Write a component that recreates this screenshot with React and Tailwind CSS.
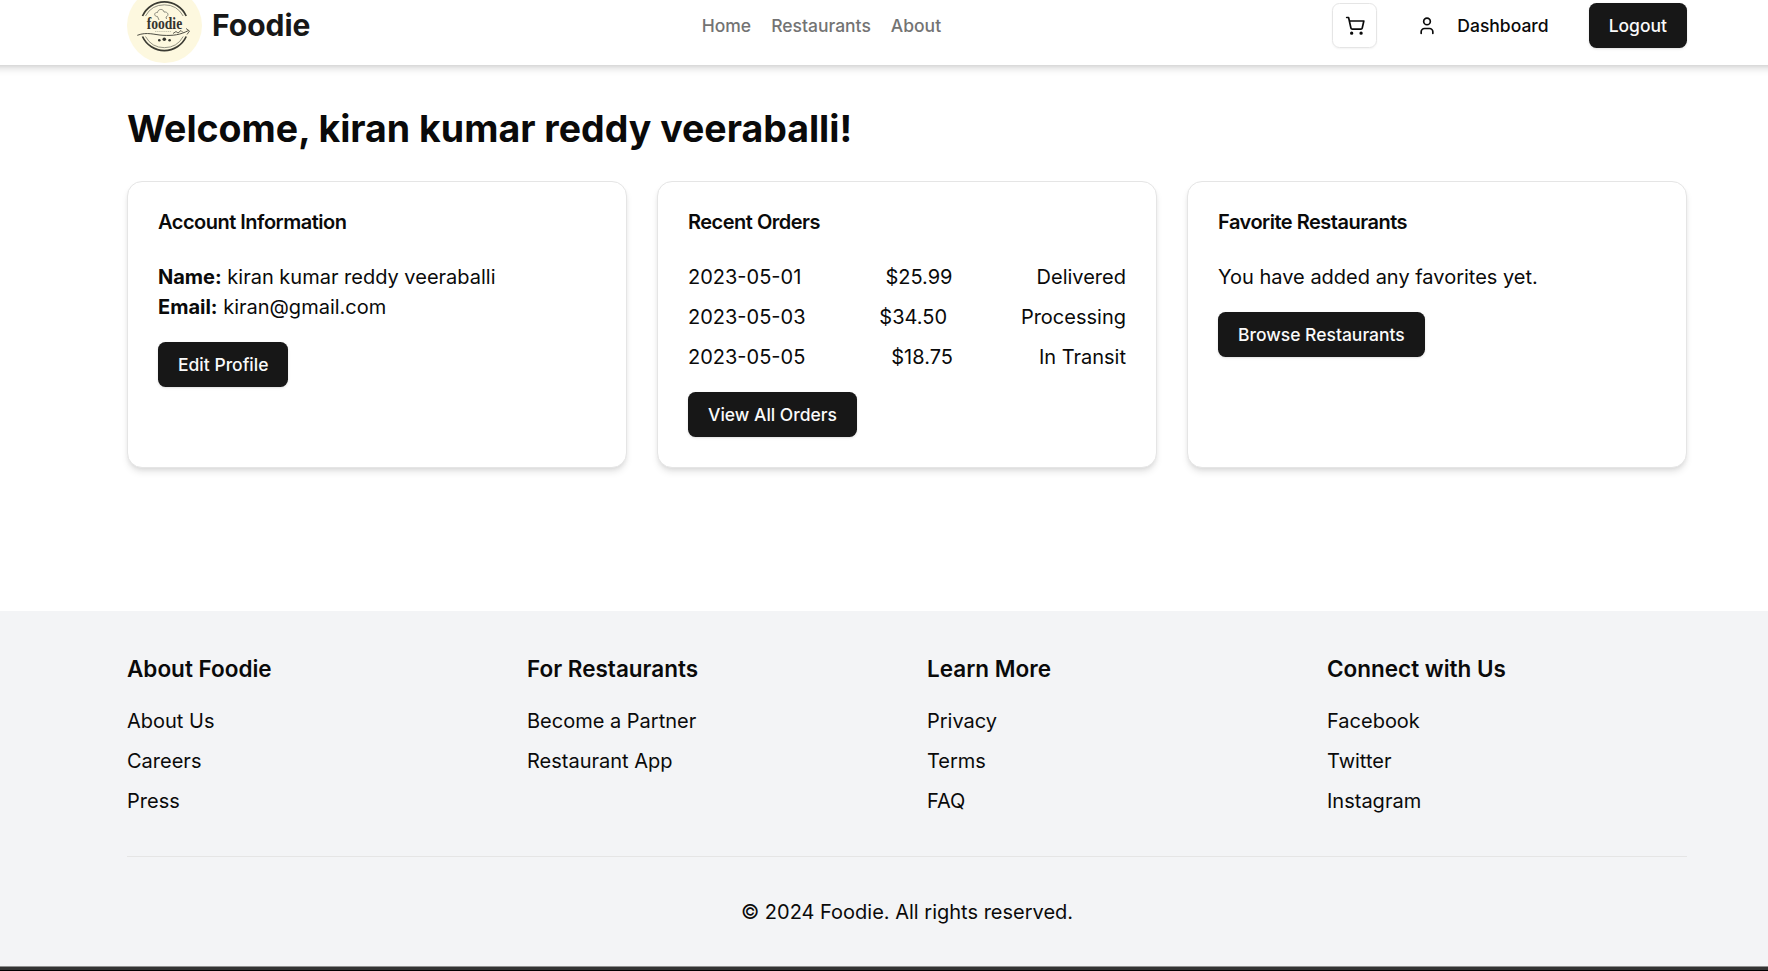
const orders = [
  ["2023-05-01", "$25.99", "Delivered"],
  ["2023-05-03", "$34.50", "Processing"],
  ["2023-05-05", "$18.75", "In Transit"],
];

const footerColumns = [
  { title: "About Foodie", links: ["About Us", "Careers", "Press"] },
  { title: "For Restaurants", links: ["Become a Partner", "Restaurant App"] },
  { title: "Learn More", links: ["Privacy", "Terms", "FAQ"] },
  { title: "Connect with Us", links: ["Facebook", "Twitter", "Instagram"] },
];

function Button({ children }) {
  return (
    <button className="h-[45px] rounded-[7.5px] bg-[#171717] px-5 text-[17.5px] leading-[25px] font-medium text-neutral-50 shadow-sm">
      {children}
    </button>
  );
}

function Card({ title, children }) {
  return (
    <section className="h-[287px] rounded-[15px] border border-[#e5e5e5] bg-white px-[30px] pt-[30px] shadow-[0_5px_7.5px_-1.25px_rgba(0,0,0,0.1),0_2.5px_5px_-2.5px_rgba(0,0,0,0.1)]">
      <h3 className="text-[20px] leading-5 font-semibold tracking-[-0.5px]">{title}</h3>
      <div className="pt-[30px]">{children}</div>
    </section>
  );
}

function Logo() {
  return (
    <svg className="size-[75px] shrink-0" viewBox="0 0 75 75">
      <circle cx="37.5" cy="37.5" r="37.5" fill="#fdf8df" />
      <g fill="none" stroke="#3a3a32">
        <path d="M15.5 28 A24 24 0 0 1 59.2 28" strokeWidth="1.7" />
        <path d="M18.5 28 A21.5 21.5 0 0 1 56.2 28" stroke="#77776b" strokeWidth="0.8" />
        <path d="M15.5 48.5 A24 24 0 0 0 59.2 48.5" strokeWidth="1.7" />
        <path d="M18.5 48.5 A21.5 21.5 0 0 0 56.2 48.5" stroke="#77776b" strokeWidth="0.8" />
        <path d="M32 32 L30.5 28.5 C26.5 28.5 27 24 30.5 24.5 C31 20.5 36.5 20.5 37 24 C41 23.5 42.5 27.5 39 29 L39.5 31" stroke="#8a8a7d" strokeWidth="1" />
        <path d="M10.3 47.3 C20 43.5 28 47 36 47.3 C46 47.8 53 47 61.5 42.5" strokeWidth="0.9" />
        <path d="M46 45.5 L49 43.5 L51 45 L54 42.5 L56 44.5 M59 40.5 L62.5 43 L60 46.5" strokeWidth="0.8" />
        <path d="M28 43.5 H44" stroke="#b9b7a4" strokeWidth="0.8" strokeDasharray="1.4 0.7" />
      </g>
      <text
        x="19.7"
        y="41.3"
        textLength="35.5"
        lengthAdjust="spacingAndGlyphs"
        fontFamily="Liberation Serif, serif"
        fontWeight="700"
        fontSize="17"
        fill="#34342e"
      >
        foodie
      </text>
      <g fill="#34342e">
        <circle cx="32.3" cy="52.3" r="1.3" />
        <circle cx="37.3" cy="51.3" r="1.8" />
        <circle cx="42.6" cy="52.3" r="1.3" />
      </g>
    </svg>
  );
}

export default function App() {
  return (
    <div className="flex h-[971px] w-[1768px] flex-col overflow-hidden bg-white font-[Inter,sans-serif] text-[20px] leading-[30px] text-neutral-950">
      <header className="z-10 -mx-5 flex h-[65px] shrink-0 flex-col justify-end bg-white pr-[101px] pl-[147px] shadow-[0_5px_7.5px_-1.25px_rgba(0,0,0,0.12),0_2.5px_5px_-2.5px_rgba(0,0,0,0.12)]">
        <div className="flex h-[79px] shrink-0 items-center justify-between">
          <div className="flex items-center gap-[10px]">
            <Logo />
            <span className="pb-[2px] text-[30px] leading-10 font-bold text-neutral-900">Foodie</span>
          </div>
          <nav className="flex gap-5 text-[17.5px] leading-[25px] font-medium text-neutral-500">
            <a>Home</a>
            <a>Restaurants</a>
            <a>About</a>
          </nav>
          <div className="flex items-center gap-5">
            <button className="flex size-[45px] items-center justify-center rounded-[7.5px] border border-[#e5e5e5] shadow-xs">
              <svg className="size-5" viewBox="0 0 24 24" fill="none" stroke="currentColor" strokeWidth="2" strokeLinecap="round" strokeLinejoin="round">
                <path d="M2 1.8h2.3l2.8 12.6a1.8 1.8 0 0 0 1.8 1.4h10a1.8 1.8 0 0 0 1.8-1.4L22.6 6H5.2" />
                <circle cx="8" cy="20.6" r="1" />
                <circle cx="19.3" cy="20.6" r="1" />
              </svg>
            </button>
            <button className="flex h-[45px] items-center gap-5 px-5 text-[17.5px] font-medium">
              <svg className="size-5" viewBox="0 0 24 24" fill="none" stroke="currentColor" strokeWidth="2" strokeLinecap="round" strokeLinejoin="round">
                <circle cx="12" cy="6.5" r="4" />
                <path d="M19 21v-2a4 4 0 0 0-4-4H9a4 4 0 0 0-4 4v2" />
              </svg>
              Dashboard
            </button>
            <Button>Logout</Button>
          </div>
        </div>
      </header>

      <main className="h-[546px] shrink-0 pt-[41px] pr-[81px] pl-[127px]">
        <h1 className="text-[37.5px] leading-[45px] font-bold">Welcome, kiran kumar reddy veeraballi!</h1>
        <div className="mt-[30px] grid grid-cols-3 gap-[30px]">
          <Card title="Account Information">
            <p><strong className="font-bold">Name:</strong> kiran kumar reddy veeraballi</p>
            <p className="mb-5"><strong className="font-bold">Email:</strong> kiran@gmail.com</p>
            <Button>Edit Profile</Button>
          </Card>
          <Card title="Recent Orders">
            <ul className="mb-5 space-y-[10px]">
              {orders.map(([date, price, status]) => (
                <li key={date} className="flex justify-between">
                  <span>{date}</span>
                  <span>{price}</span>
                  <span>{status}</span>
                </li>
              ))}
            </ul>
            <Button>View All Orders</Button>
          </Card>
          <Card title="Favorite Restaurants">
            <p className="mb-5">You have added any favorites yet.</p>
            <Button>Browse Restaurants</Button>
          </Card>
        </div>
      </main>

      <footer className="h-[355px] shrink-0 bg-gray-100 pt-10 pr-[81px] pl-[127px]">
        <div className="grid grid-cols-4 gap-10">
          {footerColumns.map(({ title, links }) => (
            <div key={title}>
              <h3 className="mb-5 text-[22.5px] leading-[35px] font-semibold">{title}</h3>
              <ul className="space-y-[10px]">
                {links.map((link) => (
                  <li key={link}>{link}</li>
                ))}
              </ul>
            </div>
          ))}
        </div>
        <div className="mt-10 border-t border-[#e5e5e5] pt-10 text-center">© 2024 Foodie. All rights reserved.</div>
      </footer>
      <div className="h-[5px] shrink-0 border-t border-b border-t-[#8f8f8f] border-b-black bg-[#333333]" />
    </div>
  );
}
